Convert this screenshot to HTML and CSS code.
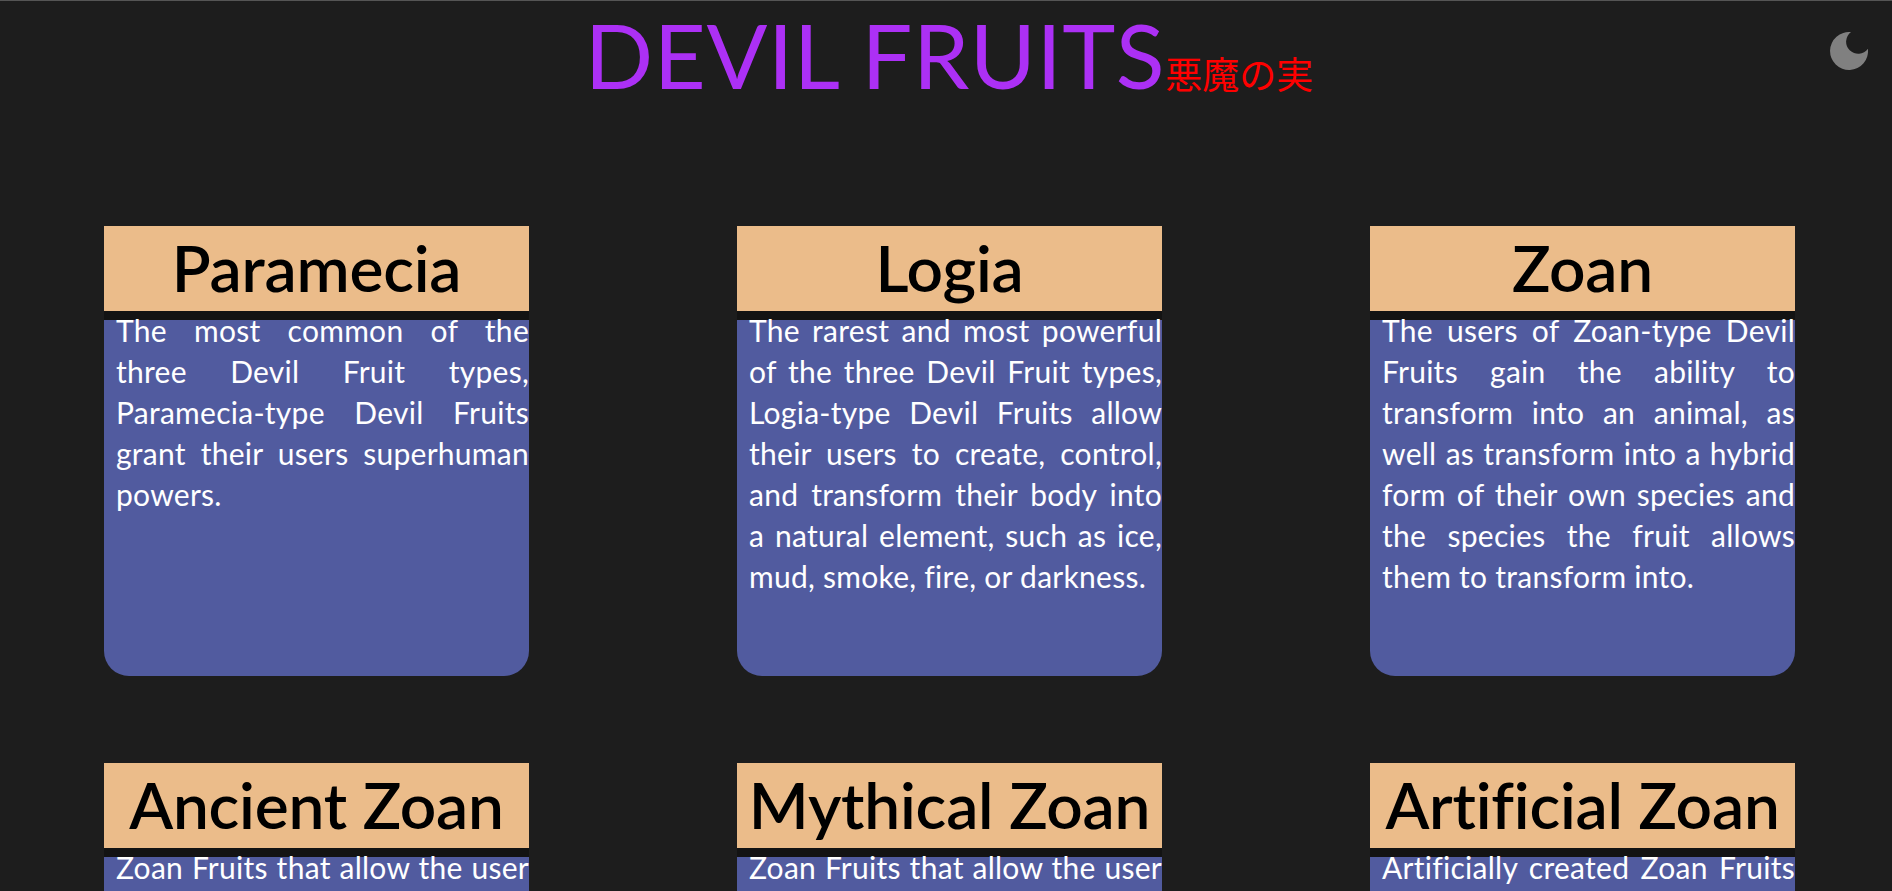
FILE: index.html
```html
<!DOCTYPE html>
<html>
<head>
  <meta charset="UTF-8">
  <link rel="stylesheet" href="styles.css">
  <title>Devil Fruits</title>
</head>
<body>
  <header class="top">
    <h1 class="title">DEVIL FRUITS<span class="title-jp">悪魔の実</span></h1>
    <button class="theme-btn" type="button" aria-label="Toggle theme">
      <svg width="38" height="38" viewBox="0 0 38 38"><path d="M21 .1A19 19 0 1 0 37.9 16.7 12 12 0 1 1 21 .1Z" fill="#808080"/></svg>
    </button>
  </header>
  <main class="cards">
    <section class="card">
      <h2 class="card-title">Paramecia</h2>
      <div class="card-body">
        <p class="card-text">The most common of the three Devil Fruit types, Paramecia-type Devil Fruits grant their users superhuman powers.</p>
      </div>
    </section>
    <section class="card">
      <h2 class="card-title">Logia</h2>
      <div class="card-body">
        <p class="card-text">The rarest and most powerful of the three Devil Fruit types, Logia-type Devil Fruits allow their users to create, control, and transform their body into a natural element, such as ice, mud, smoke, fire, or darkness.</p>
      </div>
    </section>
    <section class="card">
      <h2 class="card-title">Zoan</h2>
      <div class="card-body">
        <p class="card-text">The users of Zoan-type Devil Fruits gain the ability to transform into an animal, as well as transform into a hybrid form of their own species and the species the fruit allows them to transform into.</p>
      </div>
    </section>
    <section class="card">
      <h2 class="card-title">Ancient Zoan</h2>
      <div class="card-body">
        <p class="card-text">Zoan Fruits that allow the user to transform into a prehistoric animal.</p>
      </div>
    </section>
    <section class="card">
      <h2 class="card-title">Mythical Zoan</h2>
      <div class="card-body">
        <p class="card-text">Zoan Fruits that allow the user to transform into a creature of myth.</p>
      </div>
    </section>
    <section class="card">
      <h2 class="card-title">Artificial Zoan</h2>
      <div class="card-body">
        <p class="card-text">Artificially created Zoan Fruits made by scientists.</p>
      </div>
    </section>
  </main>
</body>
</html>
```

FILE: styles.css
```css
html {
  height: 100%;
  overflow: hidden;
}
body {
  margin: 0;
  background-color: #1d1d1d;
  border-top: 1px solid #555;
  font-family: "Lato", "Noto Sans", sans-serif;
}
.top {
  position: relative;
  height: 225px;
}
.title {
  margin: 0;
  padding-left: 6px;
  display: flex;
  justify-content: center;
  align-items: baseline;
  font-size: 90px;
  font-weight: 400;
  letter-spacing: 0.6px;
  line-height: 106px;
  color: #ac30f5;
}
.title-jp {
  font-family: "Noto Sans CJK JP", serif;
  font-size: 37px;
  font-weight: 400;
  letter-spacing: 0;
  color: #f00;
}
.theme-btn {
  position: absolute;
  top: 31px;
  right: 24px;
  padding: 0;
  border: none;
  background: none;
  cursor: pointer;
}
.cards {
  display: grid;
  grid-template-columns: repeat(3, 425px);
  justify-content: space-between;
  row-gap: 87px;
  padding: 0 97px 0 104px;
}
.card-title {
  margin: 0;
  height: 85px;
  background-color: #ebbc8a;
  color: #000;
  font-size: 64px;
  font-weight: 600;
  letter-spacing: -0.2px;
  line-height: 83px;
  text-align: center;
}
.card-body {
  display: flow-root;
  height: 356px;
  border-top: 9px solid #131313;
  background-color: #515b9f;
  border-radius: 0 0 25px 25px;
}
.card-text {
  margin: -10px 0 0;
  padding-left: 12px;
  color: #fff;
  font-size: 30px;
  letter-spacing: 0.27px;
  line-height: 41px;
  text-align: justify;
}
```
